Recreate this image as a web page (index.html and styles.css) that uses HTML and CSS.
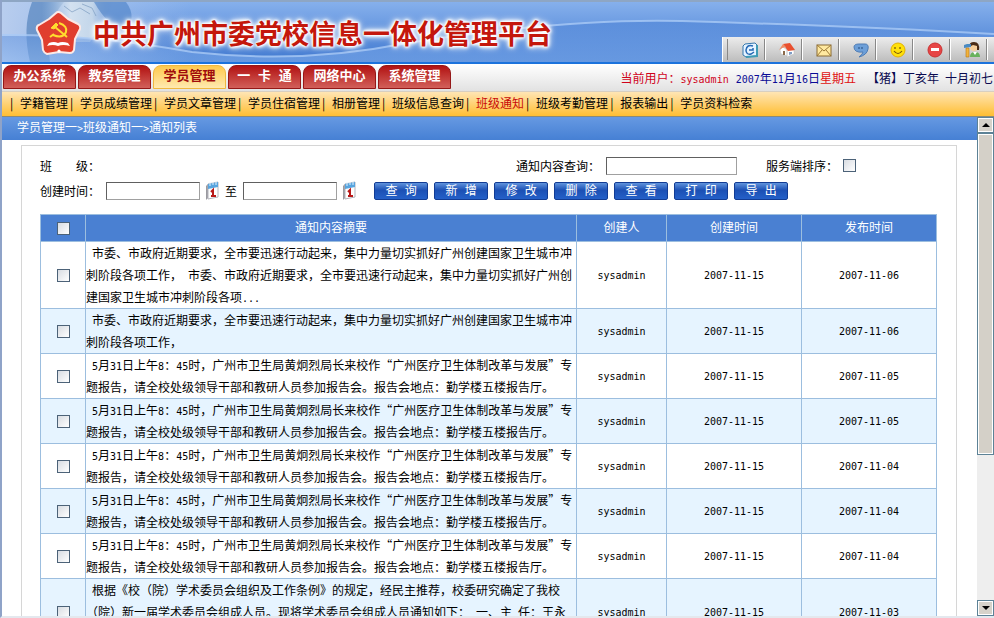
FILE: index.html
```html
<!DOCTYPE html>
<html lang="zh-CN">
<head>
<meta charset="utf-8">
<title>中共广州市委党校信息一体化管理平台</title>
<link rel="stylesheet" href="styles.css">
</head>
<body>
<header class="banner">
  <svg class="banner-art" viewBox="0 0 992 60" preserveAspectRatio="none" aria-hidden="true">
    <defs>
      <linearGradient id="sky" x1="0" y1="0" x2="0" y2="1"><stop offset="0" stop-color="#86b0ec"/><stop offset="1" stop-color="#4079d0"/></linearGradient>
      <linearGradient id="low" x1="0" y1="0" x2="0" y2="1"><stop offset="0" stop-color="#4c82d6"/><stop offset="1" stop-color="#86b2ee"/></linearGradient>
      <linearGradient id="pale" x1="0" y1="0" x2="1" y2="0"><stop offset="0" stop-color="#b8cdee"/><stop offset="1" stop-color="#b8cdee" stop-opacity="0"/></linearGradient>
      <linearGradient id="globe" x1="0" y1="0" x2="1" y2="0"><stop offset="0" stop-color="#9dbde2" stop-opacity="0"/><stop offset=".4" stop-color="#d3e1f0"/><stop offset=".7" stop-color="#c3d6ea"/><stop offset="1" stop-color="#7fa5d8" stop-opacity="0"/></linearGradient>
    </defs>
    <rect width="992" height="60" fill="url(#sky)"/>
    <rect width="190" height="60" fill="url(#pale)"/>
    <path d="M30 0H62Q42 22 48 60H28Q20 26 30 0Z" fill="#5585be" opacity=".7"/>
    <path d="M40 0H112Q98 24 88 40H46Q38 20 40 0Z" fill="url(#globe)"/>
    <path d="M92 0H124Q136 16 122 30Q106 24 92 0Z" fill="#4a7fc4" opacity=".6"/>
    <path d="M62 4 70 10 78 6 88 12M80 2 90 6 94 14" fill="none" stroke="#7d9cc0" opacity=".7"/>
    <path d="M0 34Q90 32 190 50Q300 62 400 42Q560 16 680 19Q850 24 992 32V60H0Z" fill="url(#low)" opacity=".55"/>
    <path d="M0 33Q90 32 190 50Q300 62 400 42Q560 16 680 19Q850 24 992 32" fill="none" stroke="#a9c9f5" stroke-width="2" opacity=".8"/>
  </svg>
  <div class="brand">
    <svg class="emblem" viewBox="0 0 46 46" aria-hidden="true">
      <path d="M21 3Q23 1 26 3L33 9 43 14Q46 16 45 19L40 29 39 40Q38 43 35 43L24 42 12 44Q9 43 8 40L7 30 2 20Q1 16 4 15L14 9Z" fill="#e03e2e" stroke="#fbe9e6" stroke-width="2" stroke-linejoin="round"/>
      <path d="M24 13Q33 16 31 22Q28 29 18 25" fill="none" stroke="#ffdc2e" stroke-width="2"/>
      <path d="M15 27 19 24" stroke="#ffdc2e" stroke-width="2"/>
      <path d="M16 18 21 13 23 15 19 19Z" fill="#ffdc2e" stroke="#ffdc2e"/>
      <path d="M20 17 32 27" stroke="#ffdc2e" stroke-width="2"/>
      <path d="M14 33Q19 31 23 33Q27 31 33 33L35 36Q28 34 23 36Q18 34 12 36Z" fill="#fff"/>
      <circle cx="24" cy="41" r="1.6" fill="#fff"/>
    </svg>
    <h1>中共广州市委党校信息一体化管理平台</h1>
  </div>
  <nav class="tools" aria-label="工具">
    <a href="#" aria-label="刷新"><svg viewBox="0 0 16 16"><path d="M3 2 13 1 15 3V14L4 15 1 13V4Z" fill="#e5f3ff" stroke="#3678ae"/><path d="M15 3V14L4 15" fill="none" stroke="#3f9bb6" stroke-width="2"/><path d="M11 4Q5 2 4 8Q4 13 9 12L12 10M7 8H11V6" fill="none" stroke="#2568b5" stroke-width="1.5"/></svg></a>
    <a href="#" aria-label="首页"><svg viewBox="0 0 16 16"><path d="M1 8 4 5 8 8V14L2 12ZM8 8H15V12L8 15Z" fill="#fff" stroke="#bbb" stroke-width=".5"/><path d="M4 2 11 1 16 8 9 9Z" fill="#e9502f"/><path d="M0 8 4 2 7 5 3 6Z" fill="#f08b64"/><path d="M4 9H6V13H4Z" fill="#8a6a4a"/><path d="M10 10H13V12L10 13Z" fill="#7f9cc4"/></svg></a>
    <a href="#" aria-label="邮件"><svg viewBox="0 0 16 16"><rect x="1" y="3" width="14" height="11" fill="#ffe9a0" stroke="#8a6a32"/><path d="M1 3 8 9 15 3M1 14 6 8M15 14 10 8" fill="none" stroke="#9b7836"/></svg></a>
    <a href="#" aria-label="消息"><svg viewBox="0 0 16 16"><path d="M1 5Q1 2 6 2H12Q16 2 15 7Q14 13 6 15Q10 12 10 10Q1 11 1 5Z" fill="#6d9fd8" stroke="#4e7cb5"/><path d="M6 5V7M9 5V7" stroke="#234a7d"/></svg></a>
    <a href="#" aria-label="论坛"><svg viewBox="0 0 16 16"><circle cx="8" cy="8" r="7" fill="#ffe10a" stroke="#e3b100"/><path d="M5 5V7M10 5V7M4 9Q8 14 12 9" fill="none" stroke="#72530a" stroke-width="1.2"/></svg></a>
    <a href="#" aria-label="退出"><svg viewBox="0 0 16 16"><circle cx="8" cy="8" r="7" fill="#e74545" stroke="#c93232"/><rect x="4" y="6" width="8" height="3" fill="#fff"/></svg></a>
    <a href="#" aria-label="个人设置"><svg viewBox="0 0 16 16"><circle cx="10" cy="5" r="4" fill="#f7cf9b"/><path d="M5 5Q5 0 10 0Q16 0 15 8L13 8V4L9 3Z" fill="#4a2d18"/><path d="M6 15Q6 10 11 10Q16 10 16 15Z" fill="#67b25c"/><path d="M9 10 11 13 13 10Z" fill="#fff"/><path d="M0 3 3 2H7V5L0 6Z" fill="#4a8ac2"/><path d="M2 6H5V15H2Z" fill="#f2b33c" stroke="#b67716" stroke-width=".6"/></svg></a>
  </nav>
</header>

<div class="tabbar">
  <nav class="tabs">
    <a href="#">办公系统</a>
    <a href="#">教务管理</a>
    <a href="#" class="current">学员管理</a>
    <a href="#">一 卡 通</a>
    <a href="#">网络中心</a>
    <a href="#">系统管理</a>
  </nav>
  <div class="status">
    <span class="user">当前用户：<span class="n">sysadmin</span></span>
    <span class="date"><span class="n">2007</span>年<span class="n">11</span>月<span class="n">16</span>日<em>星期五</em></span>
    <span class="lunar">【猪】丁亥年<span class="n"> </span>十月初七</span>
  </div>
</div>

<nav class="subnav">
  <a href="#">学籍管理</a>
  <a href="#">学员成绩管理</a>
  <a href="#">学员文章管理</a>
  <a href="#">学员住宿管理</a>
  <a href="#">相册管理</a>
  <a href="#">班级信息查询</a>
  <a href="#" class="current">班级通知</a>
  <a href="#">班级考勤管理</a>
  <a href="#">报表输出</a>
  <a href="#">学员资料检索</a>
</nav>

<div class="frame">
  <main>
    <div class="crumbs">学员管理一<span class="n">&gt;</span>班级通知一<span class="n">&gt;</span>通知列表</div>
    <section class="panel">
      <form class="filters">
        <div class="line">
          <span class="class-name">班　　级：</span>
          <label for="q">通知内容查询：</label>
          <input type="text" id="q" class="wide">
          <label for="sort" class="sort">服务端排序：</label>
          <input type="checkbox" id="sort">
        </div>
        <div class="line">
          <label for="from">创建时间：</label>
          <input type="text" id="from">
          <button type="button" class="cal" aria-label="选择开始日期"><svg viewBox="0 0 15 20"><path d="M1 5 3 3V17L1 19Z" fill="#9a9aa0"/><path d="M3 3 13 1V16L3 18Z" fill="#fdfdfd" stroke="#b3b3bb"/><path d="M3 3 13 1V6L3 8Z" fill="#58a5df"/><path d="M5 1V5M8 1V4M11 0V4" stroke="#e4f2ff"/><path d="M6 11 8 9V15M6 15H11" fill="none" stroke="#b81818" stroke-width="2"/></svg></button>
          <label for="to">至</label>
          <input type="text" id="to">
          <button type="button" class="cal" aria-label="选择结束日期"><svg viewBox="0 0 15 20"><path d="M1 5 3 3V17L1 19Z" fill="#9a9aa0"/><path d="M3 3 13 1V16L3 18Z" fill="#fdfdfd" stroke="#b3b3bb"/><path d="M3 3 13 1V6L3 8Z" fill="#58a5df"/><path d="M5 1V5M8 1V4M11 0V4" stroke="#e4f2ff"/><path d="M6 11 8 9V15M6 15H11" fill="none" stroke="#b81818" stroke-width="2"/></svg></button>
          <div class="actions">
            <button type="button">查 询</button>
            <button type="button">新 增</button>
            <button type="button">修 改</button>
            <button type="button">删 除</button>
            <button type="button">查 看</button>
            <button type="button">打 印</button>
            <button type="button">导 出</button>
          </div>
        </div>
      </form>

      <table>
        <colgroup><col class="c-pick"><col><col class="c-author"><col class="c-date"><col class="c-date"></colgroup>
        <thead>
          <tr><th><input type="checkbox" aria-label="全选"></th><th>通知内容摘要</th><th>创建人</th><th>创建时间</th><th>发布时间</th></tr>
        </thead>
        <tbody>
          <tr><td><input type="checkbox" aria-label="选择"></td><td class="text">市委、市政府近期要求，全市要迅速行动起来，集中力量切实抓好广州创建国家卫生城市冲刺阶段各项工作，<span class="n"> </span>市委、市政府近期要求，全市要迅速行动起来，集中力量切实抓好广州创建国家卫生城市冲刺阶段各项<span class="n">...</span></td><td><span class="n">sysadmin</span></td><td><span class="n">2007-11-15</span></td><td><span class="n">2007-11-06</span></td></tr>
          <tr><td><input type="checkbox" aria-label="选择"></td><td class="text">市委、市政府近期要求，全市要迅速行动起来，集中力量切实抓好广州创建国家卫生城市冲刺阶段各项工作，</td><td><span class="n">sysadmin</span></td><td><span class="n">2007-11-15</span></td><td><span class="n">2007-11-06</span></td></tr>
          <tr><td><input type="checkbox" aria-label="选择"></td><td class="text"><span class="n">5</span>月<span class="n">31</span>日上午<span class="n">8</span>：<span class="n">45</span>时，广州市卫生局黄炯烈局长来校作“广州医疗卫生体制改革与发展”专题报告，请全校处级领导干部和教研人员参加报告会。报告会地点：勤学楼五楼报告厅。</td><td><span class="n">sysadmin</span></td><td><span class="n">2007-11-15</span></td><td><span class="n">2007-11-05</span></td></tr>
          <tr><td><input type="checkbox" aria-label="选择"></td><td class="text"><span class="n">5</span>月<span class="n">31</span>日上午<span class="n">8</span>：<span class="n">45</span>时，广州市卫生局黄炯烈局长来校作“广州医疗卫生体制改革与发展”专题报告，请全校处级领导干部和教研人员参加报告会。报告会地点：勤学楼五楼报告厅。</td><td><span class="n">sysadmin</span></td><td><span class="n">2007-11-15</span></td><td><span class="n">2007-11-05</span></td></tr>
          <tr><td><input type="checkbox" aria-label="选择"></td><td class="text"><span class="n">5</span>月<span class="n">31</span>日上午<span class="n">8</span>：<span class="n">45</span>时，广州市卫生局黄炯烈局长来校作“广州医疗卫生体制改革与发展”专题报告，请全校处级领导干部和教研人员参加报告会。报告会地点：勤学楼五楼报告厅。</td><td><span class="n">sysadmin</span></td><td><span class="n">2007-11-15</span></td><td><span class="n">2007-11-04</span></td></tr>
          <tr><td><input type="checkbox" aria-label="选择"></td><td class="text"><span class="n">5</span>月<span class="n">31</span>日上午<span class="n">8</span>：<span class="n">45</span>时，广州市卫生局黄炯烈局长来校作“广州医疗卫生体制改革与发展”专题报告，请全校处级领导干部和教研人员参加报告会。报告会地点：勤学楼五楼报告厅。</td><td><span class="n">sysadmin</span></td><td><span class="n">2007-11-15</span></td><td><span class="n">2007-11-04</span></td></tr>
          <tr><td><input type="checkbox" aria-label="选择"></td><td class="text"><span class="n">5</span>月<span class="n">31</span>日上午<span class="n">8</span>：<span class="n">45</span>时，广州市卫生局黄炯烈局长来校作“广州医疗卫生体制改革与发展”专题报告，请全校处级领导干部和教研人员参加报告会。报告会地点：勤学楼五楼报告厅。</td><td><span class="n">sysadmin</span></td><td><span class="n">2007-11-15</span></td><td><span class="n">2007-11-04</span></td></tr>
          <tr class="tall"><td><input type="checkbox" aria-label="选择"></td><td class="text">根据《校（院）学术委员会组织及工作条例》的规定，经民主推荐，校委研究确定了我校（院）新一届学术委员会组成人员。现将学术委员会组成人员通知如下：<span class="n"> </span>一、主<span class="n"> </span>任：王永</td><td><span class="n">sysadmin</span></td><td><span class="n">2007-11-15</span></td><td><span class="n">2007-11-03</span></td></tr>
        </tbody>
      </table>
    </section>
  </main>
  <div class="scroll">
    <button type="button" aria-label="向上滚动"><svg viewBox="0 0 8 4"><path d="M0 4 4 0 8 4Z"/></svg></button>
    <div class="track"><div class="thumb"></div></div>
    <button type="button" aria-label="向下滚动"><svg viewBox="0 0 8 4"><path d="M0 0 4 4 8 0Z"/></svg></button>
  </div>
</div>
</body>
</html>
```
FILE: styles.css
```css
*, *::before { box-sizing: border-box; }

body {
  display: flex;
  flex-direction: column;
  height: 100vh;
  margin: 0;
  overflow: hidden;
  border-left: 2px solid #8fa3c8;
  border-bottom: 2px solid #e4e8ee;
  background: #fff;
  color: #000;
  font: 12px/22px "Noto Sans CJK SC", sans-serif;
  text-spacing-trim: space-all;
}

a { color: inherit; text-decoration: none; white-space: nowrap; }
input, button { margin: 0; padding: 0; font: inherit; }

/* half-width latin letters and digits */
.n {
  font-family: "DejaVu Sans Mono", monospace;
  font-size: 10px;
  line-height: 1;
  white-space: pre-wrap;
}

/* banner */
.banner {
  position: relative;
  display: flex;
  flex: none;
  justify-content: space-between;
  height: 64px;
  border-top: 2px solid #8ea6c4;
  border-bottom: 2px solid #1b72dc;
}
.banner-art { position: absolute; inset: 0; width: 100%; height: 100%; }
.brand { position: relative; display: flex; align-items: center; gap: 12px; padding: 2px 0 0 33px; }
.emblem { width: 46px; height: 46px; }
h1 {
  margin: 0;
  color: #c4170c;
  font-size: 27px;
  font-weight: 700;
  line-height: 40px;
  white-space: nowrap;
  text-shadow: 0 0 2px #fff, 0 0 2px #fff, 0 0 3px #fff, 0 0 4px #fff, 0 0 4px #fff, 0 0 6px #fff, 0 0 8px #fff;
}
.tools {
  position: relative;
  display: flex;
  align-self: flex-end;
  height: 25px;
  padding: 2px 7px 2px 4px;
  border-left: 1px solid #fff;
  background: linear-gradient(#ececec, #bcbcbc);
}
.tools::before { content: ""; border-left: 1px solid #888; }
.tools a {
  display: flex;
  align-items: center;
  justify-content: flex-end;
  width: 37px;
  padding-right: 6px;
  border-right: 1px solid #888;
  box-shadow: 1px 0 #fff;
}
.tools svg { width: 16px; height: 16px; }

/* main tabs */
.tabbar {
  display: flex;
  flex: none;
  align-items: flex-end;
  justify-content: space-between;
  height: 28px;
  padding: 0 1px 2px;
  border-bottom: 1px solid #d8cfc0;
  background: linear-gradient(#fff, #e2e2e2);
}
.tabs { display: flex; gap: 2px; }
.tabs a {
  width: 73px;
  height: 24px;
  border: 1px solid #951818;
  border-radius: 8px 8px 0 0;
  background: linear-gradient(#b21212, #d2605a);
  color: #fff;
  font: bold 13px/22px "Liberation Mono", "Noto Sans CJK SC", monospace;
  text-align: center;
}
.tabs .current {
  border-color: #f0b840;
  background: linear-gradient(#ffc94c, #ffeab0);
  color: #a00c0c;
}
.status { display: flex; gap: 7px; white-space: nowrap; }
.user { color: #d0021b; }
.date { color: #0a0a96; }
.date em { color: #e01010; font-style: normal; }
.lunar { color: #0a0a50; margin-left: 4px; }

/* second-level menu */
.subnav {
  display: flex;
  flex: none;
  height: 25px;
  padding-left: 6px;
  border-bottom: 1px solid #8a8a78;
  background: linear-gradient(#ffe5b4, #ffbe32);
  line-height: 22px;
}
.subnav a::before {
  content: "|";
  display: inline-block;
  width: 12px;
  padding-left: 2px;
  color: #000;
}
.subnav .current { color: #c80a0a; }

/* content frame */
.frame { display: flex; flex: 1; min-height: 0; }
main { flex: 1; min-width: 0; overflow: hidden; }
.crumbs {
  height: 23px;
  padding-left: 15px;
  background: linear-gradient(#6699e2, #4680d4);
  color: #fff;
  line-height: 20px;
}
.panel { margin: 5px 20px 0 19px; padding: 7px 19px 0 18px; border: 1px solid #d6d6d6; border-bottom: 0; }

/* filters */
.filters { margin-bottom: 11px; }
.line { display: flex; align-items: center; height: 25px; white-space: nowrap; }
.class-name { width: 476px; }
input[type="text"] {
  width: 94px;
  height: 18px;
  margin-left: 6px;
  border: 1px solid #a0a0a0;
  border-top-color: #606060;
  border-left-color: #606060;
  background: #fff;
}
input[type="text"].wide { width: 131px; }
.sort { margin-left: 29px; }
input[type="checkbox"] {
  appearance: none;
  display: block;
  width: 13px;
  height: 13px;
  border: 1px solid #4c6278;
  background: linear-gradient(135deg, #d8dce2, #fff);
}
.sort + input { margin-left: 5px; }
.cal {
  width: 15px;
  height: 20px;
  margin: 0 5px;
  border: 0;
  background: none;
}
.cal svg { display: block; }
.actions { display: flex; gap: 6px; margin-left: 12px; }
.actions button {
  width: 54px;
  height: 18px;
  border: 1px solid #123c94;
  border-radius: 2px;
  background: linear-gradient(#5f92dc, #1c50b4 45%, #2460c8);
  color: #fff;
  font: 12px/16px "DejaVu Sans Mono", "Noto Sans CJK SC", monospace;
}

/* notice table */
table { width: 100%; border-collapse: collapse; table-layout: fixed; }
.c-pick { width: 45px; }
.c-author { width: 90px; }
.c-date { width: 135px; }
th, td { padding: 0; border: 1px solid #9cbedf; text-align: center; }
th { height: 27px; background: #4a80d2; color: #fff; font-weight: normal; }
th + th, td.text ~ td { padding-bottom: 3px; }
td.text { text-align: left; text-indent: 6px; vertical-align: top; }
tbody tr:nth-child(even) { background: #e6f4ff; }
.tall { height: 67px; }
table input[type="checkbox"] { margin: 0 auto; }

/* scrollbar */
.scroll { display: flex; flex: none; flex-direction: column; width: 17px; background: #eee; }
.scroll button {
  display: flex;
  align-items: center;
  justify-content: center;
  height: 16px;
  border: 1px solid #5c8296;
  background: #d6d2ca;
  box-shadow: inset 0 0 0 1px #fff;
}
.scroll svg { width: 8px; height: 4px; }
.track { flex: 1; }
.thumb {
  height: 69%;
  border: 1px solid #5c8296;
  background: #d4d0c8;
  box-shadow: inset 0 0 0 1px #fff;
}
```
